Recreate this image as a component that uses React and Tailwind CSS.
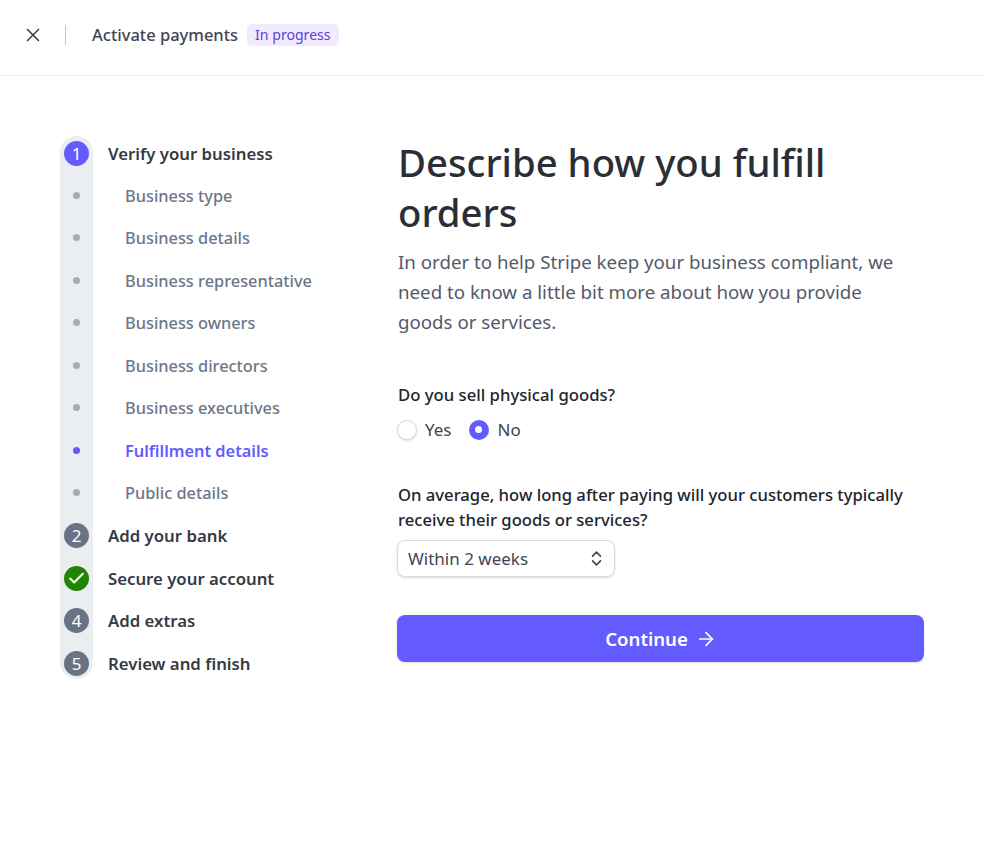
import React from "react";
import { X, ArrowRight, Check, ChevronsUpDown } from "lucide-react";

function Major({ n, label, color = "bg-[#687385]" }) {
  return (
    <div className="flex h-[42.5px] items-center pb-[1px]">
      <div className={`flex h-[25px] w-[25px] shrink-0 items-center justify-center rounded-full ${color} text-[17px] font-normal text-white`}>
        {n}
      </div>
      <span className="ml-[19px] text-[16.75px] font-semibold text-[#353a44]">{label}</span>
    </div>
  );
}

function Minor({ label, active }) {
  return (
    <div className="flex h-[42.5px] items-center">
      <div className="flex w-[25px] shrink-0 justify-center">
        <div className={`mb-[2px] h-[7px] w-[7px] rounded-full ${active ? "bg-[#635bff]" : "bg-[#a3acba]"}`} />
      </div>
      <span className={`ml-[36px] text-[16.35px] ${active ? "font-semibold text-[#635bff]" : "font-medium text-[#6c7688]"}`}>{label}</span>
    </div>
  );
}

export default function App() {
  return (
    <div className="min-h-[843px] bg-white font-['Noto_Sans',sans-serif]">
      <header className="flex h-[76px] items-center border-b border-[#ebeef1] pb-[5px] pl-[22px]">
        <X className="h-[22px] w-[22px] text-[#414552]" strokeWidth={1.8} />
        <div className="ml-[21px] h-[20px] w-px bg-[#c0c8d2]" />
        <span className="ml-[26px] text-[16.5px] font-medium text-[#414552]">Activate payments</span>
        <span className="ml-[9px] flex h-[22px] items-center rounded-[5px] bg-[#f2ebff] px-[8px] text-[14.1px] font-normal text-[#5b3fd6]">In progress</span>
      </header>
      <main className="flex items-start pl-[60px] pt-[60px]">
        <nav className="w-[337px] shrink-0">
          <div className="relative flow-root w-fit">
            <div className="absolute left-0 top-0 h-[543px] w-[33px] rounded-full bg-[#ebeef1]" />
            <div className="relative -mt-[3.5px] pl-[4px]">
              <Major n="1" label="Verify your business" color="bg-[#635bff]" />
              <Minor label="Business type" />
              <Minor label="Business details" />
              <Minor label="Business representative" />
              <Minor label="Business owners" />
              <Minor label="Business directors" />
              <Minor label="Business executives" />
              <Minor label="Fulfillment details" active />
              <Minor label="Public details" />
              <Major n="2" label="Add your bank" />
              <Major n={<Check className="h-[19px] w-[19px]" strokeWidth={2.5} />} label="Secure your account" color="bg-[#228403]" />
              <Major n="4" label="Add extras" />
              <Major n="5" label="Review and finish" />
            </div>
          </div>
        </nav>
        <section className="w-[527px] shrink-0">
          <h1 className="pl-[1px] pt-[1px] text-[38.3px] leading-[50px] font-medium text-[#2b2e37]">Describe how you fulfill orders</h1>
          <p className="mt-[10px] w-[520px] pl-[1px] text-[18.7px] leading-[30px] text-[#545969]">In order to help Stripe keep your business compliant, we need to know a little bit more about how you provide goods or services.</p>
          <div className="mt-[45px] pl-[1px] text-[16.7px] leading-[25px] font-medium text-[#21252c]">Do you sell physical goods?</div>
          <div className="mt-[10px] flex items-center text-[17px] text-[#414552]">
            <span className="h-[20px] w-[20px] rounded-full border border-[#d5dbe1] bg-white shadow-sm" />
            <span className="ml-[8px]">Yes</span>
            <span className="ml-[17px] flex h-[20px] w-[20px] items-center justify-center rounded-full bg-[#635bff]">
              <span className="h-[7px] w-[7px] rounded-full bg-white" />
            </span>
            <span className="ml-[9px]">No</span>
          </div>
          <div className="mt-[39px] pl-[1px] text-[16.65px] leading-[25px] font-medium text-[#21252c]">On average, how long after paying will your customers typically receive their goods or services?</div>
          <div className="mt-[8px] flex h-[37px] w-[218px] items-center justify-between rounded-[8px] border border-[#d5dbe1] bg-white pl-[10px] pr-[8px] text-[17px] text-[#414552] shadow-sm">
            <span className="pt-[2px]">Within 2 weeks</span>
            <ChevronsUpDown className="h-[19px] w-[19px]" strokeWidth={2} />
          </div>
          <button className="mt-[38px] flex h-[47px] w-[527px] items-center justify-center gap-[8px] rounded-[8px] bg-[#635bff] pt-[1px] text-[18.6px] font-semibold text-white shadow-sm">
            <span className="translate-x-[1px]">Continue</span>
            <ArrowRight className="h-[22px] w-[22px]" strokeWidth={1.8} />
          </button>
        </section>
      </main>
    </div>
  );
}
